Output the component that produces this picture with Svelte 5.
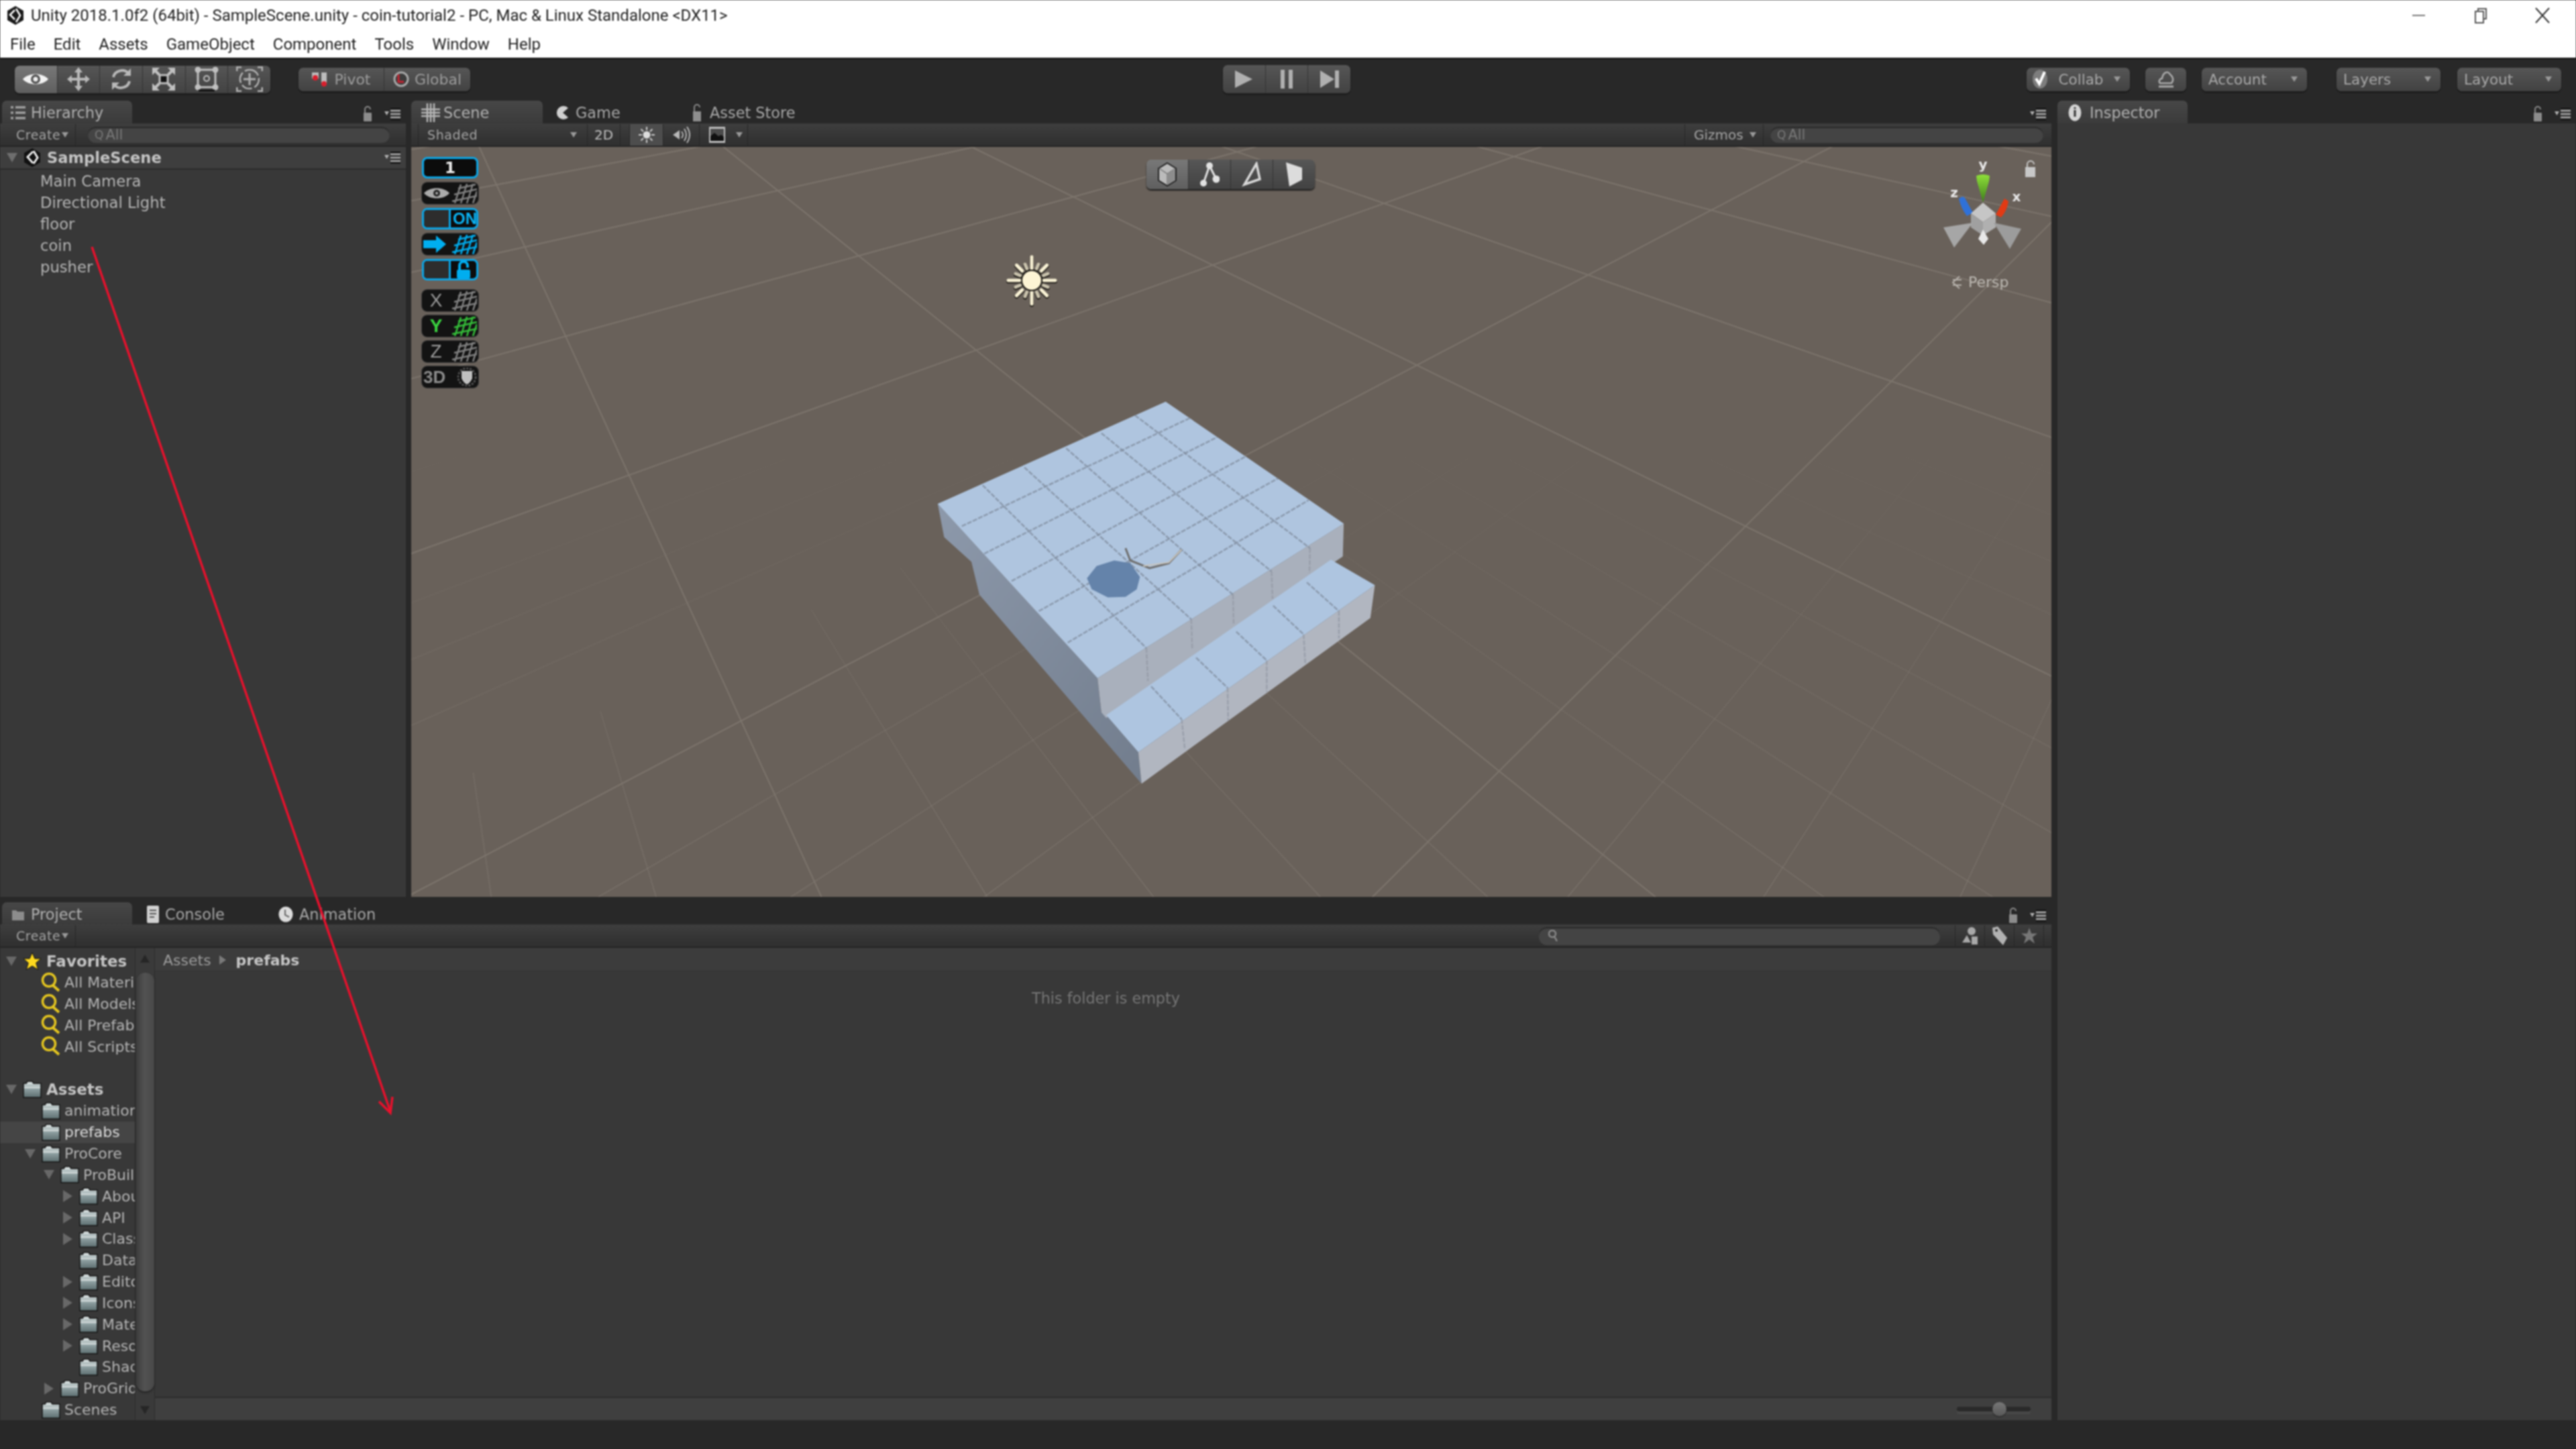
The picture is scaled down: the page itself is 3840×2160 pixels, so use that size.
<script>
  const menus = ["File", "Edit", "Assets", "GameObject", "Component", "Tools", "Window", "Help"];
  const hierarchy = ["Main Camera", "Directional Light", "floor", "coin", "pusher"];

  // depth = indent level, arrow: open | closed | none, icon: star | search | folder
  const tree = [
    { name: "Favorites", depth: 0, arrow: "open", icon: "star", bold: true },
    { name: "All Materials", depth: 1, icon: "search" },
    { name: "All Models", depth: 1, icon: "search" },
    { name: "All Prefabs", depth: 1, icon: "search" },
    { name: "All Scripts", depth: 1, icon: "search" },
    { name: "", depth: 0 },
    { name: "Assets", depth: 0, arrow: "open", icon: "folder", bold: true },
    { name: "animations", depth: 1, icon: "folder" },
    { name: "prefabs", depth: 1, icon: "folder", selected: true },
    { name: "ProCore", depth: 1, arrow: "open", icon: "folder" },
    { name: "ProBuilder", depth: 2, arrow: "open", icon: "folder" },
    { name: "About", depth: 3, arrow: "closed", icon: "folder" },
    { name: "API", depth: 3, arrow: "closed", icon: "folder" },
    { name: "Classes", depth: 3, arrow: "closed", icon: "folder" },
    { name: "Data", depth: 3, icon: "folder" },
    { name: "Editor", depth: 3, arrow: "closed", icon: "folder" },
    { name: "Icons", depth: 3, arrow: "closed", icon: "folder" },
    { name: "Material", depth: 3, arrow: "closed", icon: "folder" },
    { name: "Resources", depth: 3, arrow: "closed", icon: "folder" },
    { name: "Shaders", depth: 3, icon: "folder" },
    { name: "ProGrids", depth: 2, arrow: "closed", icon: "folder" },
    { name: "Scenes", depth: 1, icon: "folder" },
  ];

  // ground grid: homography from the unit square to four major grid crossings
  const sceneX = (x) => 613 + x / 0.6413;
  const sceneY = (y) => 219 + y / 1.4025;
  const quad = [[540, 425], [930, 118], [1415, 490], [1040, 1305]].map(([x, y]) => [sceneX(x), sceneY(y)]);
  const [[x0, y0], [x1, y1], [x2, y2], [x3, y3]] = quad;
  const det = (x1 - x2) * (y3 - y2) - (x3 - x2) * (y1 - y2);
  const sx = x0 - x1 + x2 - x3;
  const sy = y0 - y1 + y2 - y3;
  const g = (sx * (y3 - y2) - (x3 - x2) * sy) / det;
  const h = ((x1 - x2) * sy - sx * (y1 - y2)) / det;
  const project = (u, v) => {
    const w = g * u + h * v + 1;
    return { w, x: ((x1 - x0 + g * x1) * u + (x3 - x0 + h * x3) * v + x0) / w, y: ((y1 - y0 + g * y1) * u + (y3 - y0 + h * y3) * v + y0) / w };
  };
  function gridLine(axis, value, from, to) {
    const pts = [];
    for (let i = 0; i <= 200; i++) {
      const t = from + ((to - from) * i) / 200;
      const p = axis === "u" ? project(value, t) : project(t, value);
      if (p.w > 0.06) pts.push(p);
    }
    if (pts.length < 2) return null;
    const a = pts[0];
    const b = pts[pts.length - 1];
    return { x1: a.x, y1: a.y, x2: b.x, y2: b.y };
  }
  const majors = [];
  const minors = [];
  for (let i = -6; i <= 10; i++) {
    majors.push(gridLine("u", i / 2, -3, 5), gridLine("v", i / 2, -3, 5));
  }
  for (let i = -30; i <= 50; i++) {
    if (i % 5 === 0) continue;
    minors.push(gridLine("u", i / 10, 0.4, 3), gridLine("v", i / 10 + 0.4, -3, 5));
  }

  // block corners were read off a crop of the reference
  const bx = (x) => 1350 + x / 2.09;
  const by = (y) => 560 + y / 2.45;
  const poly = (list) => list.map(([x, y]) => `${bx(x).toFixed(1)},${by(y).toFixed(1)}`).join(" ");
  const seam = (a, b) => ({ x1: bx(a[0]), y1: by(a[1]), x2: bx(b[0]), y2: by(b[1]) });
  const seams = [
    [[240, 400], [750, 995]], [[370, 335], [890, 890]], [[500, 265], [1020, 800]], [[610, 210], [1140, 715]], [[715, 145], [1260, 630]],
    [[175, 550], [885, 155]], [[245, 650], [970, 225]], [[330, 750], [1060, 295]], [[415, 860], [1160, 375]], [[505, 975], [1255, 455]],
    [[765, 1135], [860, 1255]], [[905, 1030], [1003, 1140]], [[1030, 935], [1125, 1040]], [[1145, 840], [1240, 945]], [[1250, 755], [1350, 860]],
  ].map(([a, b]) => seam(a, b));
  const faceSeams = [
    [[750, 995], [755, 1115]], [[890, 890], [893, 1000]], [[1020, 800], [1022, 910]], [[1140, 715], [1143, 815]], [[1260, 630], [1258, 720]],
    [[860, 1255], [870, 1365]], [[1003, 1140], [1005, 1260]], [[1125, 1040], [1125, 1155]], [[1240, 945], [1245, 1050]], [[1350, 860], [1350, 960]],
  ].map(([a, b]) => seam(a, b));

  // sun icon: 4 long rays, 4 mid diagonals, 8 faint short ones
  const sunRays = Array.from({ length: 16 }, (_, i) => {
    const a = (i * Math.PI) / 8;
    const kind = i % 4 === 0 ? "long" : i % 2 === 0 ? "mid" : "short";
    const from = kind === "long" ? 18 : kind === "mid" ? 20 : 19;
    const to = kind === "long" ? 35 : kind === "mid" ? 32 : 26;
    return {
      x1: 1538 + Math.cos(a) * from,
      y1: 418 + Math.sin(a) * from,
      x2: 1538 + Math.cos(a) * to,
      y2: 418 + Math.sin(a) * to,
      color: kind === "short" ? "#c9c2ac" : "#f8f1d4",
    };
  });
</script>

{#snippet lock()}
  <svg class="mini" width="14" height="24" viewBox="0 0 14 24"><path d="M3 11V5a4 4 0 0 1 8 0" fill="none" stroke="#8a8a8a" stroke-width="2" /><rect x="1" y="10" width="12" height="13" rx="1" fill="#8c8c8c" /></svg>
{/snippet}

{#snippet panelMenu()}
  <svg class="mini" width="24" height="20" viewBox="0 0 24 20"><path d="M0 6h7l-3.500 6z" fill="#b0b0b0" /><rect x="9" y="1" width="15" height="18" fill="#111" /><path d="M9 5h15M9 10h15M9 15h15" stroke="#a8a8a8" stroke-width="3" /></svg>
{/snippet}

{#snippet arrowDown()}
  <svg class="caret" width="10" height="8" viewBox="0 0 10 8"><path d="M0 0h10L5 8z" fill="currentColor" /></svg>
{/snippet}

{#snippet folder()}
  <svg width="28" height="28" viewBox="0 0 28 28">
    <defs><linearGradient id="fld" x1="0" y1="0" x2="0" y2="1"><stop offset="0" stop-color="#e8eeee" /><stop offset=".32" stop-color="#a6b4b5" /><stop offset=".36" stop-color="#e0e6e6" /><stop offset=".48" stop-color="#8e9fa1" /><stop offset="1" stop-color="#5c6e70" /></linearGradient></defs>
    <path d="M1 5h4l2-3h7l2 3h11v21H1z" fill="url(#fld)" stroke="#141414" stroke-width="1.500" />
  </svg>
{/snippet}

{#snippet hatch(color)}
  <svg class="hatch" width="40" height="30" viewBox="0 0 40 30"><path d="M3 27 L40 19M6 17 L40 9M12 8 L38 2M7 30 L16 2M16 30 L25 1M25 30 L34 1M34 30 L40 12" stroke={color} stroke-width="2.500" fill="none" /></svg>
{/snippet}

<div class="editor">
  <header class="titlebar">
    <div class="title-line">
      <svg class="unity-logo" width="30" height="30" viewBox="0 0 30 30"><path d="M15 1 27 8v14l-12 7-12-7V8z" fill="#1b1b1b" /><path d="M14 7 7 14l7 7M16 5l6 10-6 10" fill="none" stroke="#fff" stroke-width="2.500" /></svg>
      <span class="title-text">Unity 2018.1.0f2 (64bit) - SampleScene.unity - coin-tutorial2 - PC, Mac &amp; Linux Standalone &lt;DX11&gt;</span>
      <div class="window-buttons">
        <svg width="24" height="24" viewBox="0 0 24 24"><path d="M2 12h19" stroke="#777" stroke-width="2" /></svg>
        <svg width="24" height="24" viewBox="0 0 24 24"><path d="M8 6V2h12v15h-4M4 6h12v17H4z" fill="none" stroke="#555" stroke-width="2" /></svg>
        <svg width="24" height="24" viewBox="0 0 24 24"><path d="M2 1l20 22M22 1L2 23" fill="none" stroke="#333" stroke-width="2" /></svg>
      </div>
    </div>
    <nav class="menu-line">
      {#each menus as item}
        <span>{item}</span>
      {/each}
    </nav>
  </header>

  <div class="toolbar">
    <div class="group tools">
      <button class="tbtn on">
        <svg width="40" height="26" viewBox="0 0 40 26"><path d="M1 13C9 3 31 3 39 13 31 23 9 23 1 13z" fill="#f2f2f2" /><circle cx="20" cy="13" r="7" fill="#555" /><circle cx="20" cy="13" r="3.500" fill="#eee" /></svg>
      </button>
      <button class="tbtn">
        <svg width="34" height="36" viewBox="0 0 34 36" fill="#b8b8b8"><path d="M17 0l6 8h-4v8h8v-4l7 6-7 6v-4h-8v8h4l-6 8-6-8h4v-8H7v4l-7-6 7-6v4h8V8h-4z" /></svg>
      </button>
      <button class="tbtn">
        <svg width="32" height="36" viewBox="0 0 32 36" fill="none" stroke="#b8b8b8" stroke-width="4"><path d="M4 15C6 5 20 2 26 9" /><path d="M28 21C26 31 12 34 6 27" /><path d="M30 2v11H19M2 34V23h11" stroke="none" fill="#b8b8b8" /></svg>
      </button>
      <button class="tbtn">
        <svg width="36" height="36" viewBox="0 0 36 36" fill="#c0c0c0"><rect x="12" y="12" width="12" height="12" fill="#111" stroke="#c0c0c0" stroke-width="3" /><path d="M1 1h11L8 5l5 5-3 3-5-5-4 4zM35 1H24l4 4-5 5 3 3 5-5 4 4zM1 35h11l-4-4 5-5-3-3-5 5-4-4zM35 35H24l4-4-5-5 3-3 5 5 4-4z" /></svg>
      </button>
      <button class="tbtn">
        <svg width="36" height="38" viewBox="0 0 36 38"><rect x="5" y="5" width="26" height="26" fill="none" stroke="#c0c0c0" stroke-width="3" /><circle cx="18" cy="18" r="4" fill="none" stroke="#c0c0c0" stroke-width="2" /><g fill="#c0c0c0"><circle cx="5" cy="5" r="4.500" /><circle cx="31" cy="5" r="4.500" /><circle cx="5" cy="31" r="4.500" /><circle cx="31" cy="31" r="4.500" /></g><path d="M6 36h24" stroke="#111" stroke-width="3" /></svg>
      </button>
      <button class="tbtn">
        <svg width="40" height="38" viewBox="0 0 40 38" fill="none" stroke="#b0b0b0"><path d="M20 5a14 14 0 1 1-.1 0" stroke-width="2.500" stroke-dasharray="16 4" /><path d="M20 10v18M11 19h18" stroke-width="3" /><path d="M1 7V1h7M39 7V1h-7M1 31v6h7M39 31v6h-7" stroke-width="3" /></svg>
      </button>
    </div>

    <div class="group pivot">
      <button class="tbtn text">
        <svg width="26" height="26" viewBox="0 0 26 26"><rect x="1" y="3" width="10" height="9" fill="#bbb" /><rect x="15" y="3" width="8" height="18" fill="#bbb" /><circle cx="6" cy="11" r="4" fill="#d81f2d" /><circle cx="19" cy="20" r="4" fill="#d81f2d" /></svg>
        Pivot
      </button>
      <button class="tbtn text">
        <svg width="24" height="30" viewBox="0 0 24 30"><circle cx="12" cy="15" r="10" fill="#3c3c3c" stroke="#a8a8a8" stroke-width="3" /><path d="M8 8v11h8" fill="none" stroke="#c42230" stroke-width="3" /></svg>
        Global
      </button>
    </div>

    <div class="group play">
      <button class="tbtn">
        <svg width="28" height="28" viewBox="0 0 28 28"><path d="M1 1l26 13L1 27z" fill="#b0b0b0" /></svg>
      </button>
      <button class="tbtn">
        <svg width="22" height="28" viewBox="0 0 22 28" fill="#b0b0b0"><rect x="2" width="6" height="28" /><rect x="14" width="6" height="28" /></svg>
      </button>
      <button class="tbtn">
        <svg width="30" height="28" viewBox="0 0 30 28" fill="#b0b0b0"><path d="M1 1l21 13L1 27z" /><rect x="23" y="1" width="6" height="26" /></svg>
      </button>
    </div>

    <div class="account-side">
      <button class="pill collab">
        <svg width="24" height="32" viewBox="0 0 24 32"><ellipse cx="12" cy="16" rx="11" ry="14" fill="#7d7d7d" /><path d="M6 15l5 8 8-18" fill="none" stroke="#fff" stroke-width="4" /></svg>
        <span>Collab</span>{@render arrowDown()}
      </button>
      <button class="pill cloud">
        <svg width="32" height="32" viewBox="0 0 32 32" fill="none" stroke="#aaa" stroke-width="2.500"><path d="M7 22c-3-3 0-7 3-7 1-8 8-13 12-6 4 3 6 8 2 13z" /><path d="M5 27h22" stroke-width="3" /></svg>
      </button>
      <button class="pill account">Account{@render arrowDown()}</button>
      <button class="pill layers">Layers{@render arrowDown()}</button>
      <button class="pill layout">Layout{@render arrowDown()}</button>
    </div>
  </div>

  <div class="workspace">
    <div class="main-column">
      <div class="top-row">
        <section class="panel">
          <div class="strip">
            <div class="tab active hierarchy-tab">
              <svg width="22" height="22" viewBox="0 0 22 22"><path d="M0 3h4M7 3h15M0 11h4M7 11h15M0 19h4M7 19h15" stroke="#a0a0a0" stroke-width="3.500" /></svg>
              Hierarchy
            </div>
            <div class="strip-actions">{@render lock()}{@render panelMenu()}</div>
          </div>
          <div class="panel-tools">
            <span class="create">Create{@render arrowDown()}</span>
            <span class="search hierarchy-search"><i>Q</i>All</span>
          </div>
          <div class="scene-head">
            <svg class="arrow-open" width="16" height="14" viewBox="0 0 16 14"><path d="M0 0h16L8 14z" fill="#6e6e6e" /></svg>
            <svg width="26" height="30" viewBox="0 0 26 30"><path d="M13 1 25 8v14l-12 7L1 22V8z" fill="#111" /><path d="M14 6 6 14l8 9M15 5l6 10-6 9" fill="none" stroke="#eee" stroke-width="3" /></svg>
            <b>SampleScene</b>
            <span class="scene-menu">{@render panelMenu()}</span>
          </div>
          <ul class="hier-list">
            {#each hierarchy as name}
              <li>{name}</li>
            {/each}
          </ul>
        </section>

        <section class="panel scene-panel">
          <div class="strip">
            <div class="tab active scene-tab">
              <svg width="28" height="28" viewBox="0 0 28 28"><path d="M9 0v28M14 0v28M19 0v28M0 9h28M0 14h28M0 19h28" stroke="#b8b8b8" stroke-width="2.500" /></svg>
              Scene
            </div>
            <div class="tab">
              <svg width="20" height="22" viewBox="0 0 20 22"><path d="M18 4A10 10 0 1 0 18 18L10 11z" fill="#d0d0d0" /></svg>
              Game
            </div>
            <div class="tab store-tab">
              <svg width="16" height="28" viewBox="0 0 16 28"><path d="M4 12V6a4 4 0 0 1 8 0" fill="none" stroke="#888" stroke-width="2" /><rect x="2" y="12" width="12" height="15" fill="#8e8e8e" /></svg>
              Asset Store
            </div>
            <div class="strip-actions">{@render panelMenu()}</div>
          </div>
          <div class="panel-tools scene-tools">
            <span class="seg shaded">Shaded{@render arrowDown()}</span>
            <span class="seg two-d">2D</span>
            <span class="seg sun-btn">
              <svg width="24" height="24" viewBox="0 0 24 24"><circle cx="12" cy="12" r="5.500" fill="#ddd" /><path d="M12 0v5M12 19v5M0 12h5M19 12h5M3.500 3.500l3.500 3.500M17 17l3.500 3.500M3.500 20.500l3.500-3.500M17 7l3.500-3.500" stroke="#ccc" stroke-width="2" /></svg>
            </span>
            <span class="seg icon-seg">
              <svg width="28" height="26" viewBox="0 0 28 26" fill="none" stroke="#b8b8b8" stroke-width="2"><path d="M1 13l10-7v14z" fill="#b8b8b8" stroke="none" /><path d="M14 8q4 5 0 10M18 4q6 9 0 18M22 1q8 12 0 24" /></svg>
            </span>
            <span class="seg icon-seg image-seg">
              <svg width="24" height="24" viewBox="0 0 24 24"><rect width="24" height="24" fill="#bdbdbd" /><rect x="2" y="3" width="20" height="18" fill="#4a4a4a" /><path d="M2 21v-7l6-5 6 5 4-2 4 3v6z" fill="#111" /></svg>
              {@render arrowDown()}
            </span>
            <span class="seg gizmos">Gizmos{@render arrowDown()}</span>
            <span class="search scene-search"><i>Q</i>All</span>
          </div>

          <div class="viewport">
            <svg class="world" width="2445" height="1118" viewBox="613 219 2445 1118">
              <defs>
                <linearGradient id="minorFade" gradientUnits="userSpaceOnUse" x1="0" y1="640" x2="0" y2="1337">
                  <stop offset="0" stop-color="#857d75" stop-opacity="0" />
                  <stop offset="1" stop-color="#857d75" stop-opacity=".5" />
                </linearGradient>
                <linearGradient id="leftFace" x1="0" y1="0" x2="1" y2="1">
                  <stop offset="0" stop-color="#8d99ab" />
                  <stop offset="1" stop-color="#727d8d" />
                </linearGradient>
                <linearGradient id="greenCone" x1="0" y1="0" x2="0" y2="1">
                  <stop offset="0" stop-color="#8fe03a" />
                  <stop offset="1" stop-color="#3d7d1c" />
                </linearGradient>
              </defs>
              {#each minors as l}
                {#if l}<line x1={l.x1} y1={l.y1} x2={l.x2} y2={l.y2} stroke="url(#minorFade)" stroke-width="1.500" />{/if}
              {/each}
              {#each majors as l}
                {#if l}<line x1={l.x1} y1={l.y1} x2={l.x2} y2={l.y2} stroke="#7c746c" stroke-width="2" />{/if}
              {/each}

              <polygon points={poly([[100, 468], [598, 1105], [610, 1230], [625, 1240], [725, 1375], [735, 1490], [230, 800], [205, 680], [120, 590]])} fill="url(#leftFace)" />
              <polygon points={poly([[598, 1105], [1365, 540], [1362, 660], [1325, 690], [625, 1250], [610, 1230]])} fill="#a9b0bc" />
              <polygon points={poly([[725, 1375], [1462, 765], [1448, 885], [735, 1490]])} fill="#b1b6c0" />
              <polygon points={poly([[625, 1240], [1325, 672], [1462, 765], [725, 1375]])} fill="#aec5e0" />
              <polygon points={poly([[100, 468], [810, 95], [1365, 540], [598, 1105]])} fill="#afc5df" />
              {#each seams as l}
                <line x1={l.x1} y1={l.y1} x2={l.x2} y2={l.y2} stroke="#7f8b9c" stroke-width="2.500" stroke-opacity=".75" stroke-dasharray="7 2" />
              {/each}
              {#each faceSeams as l}
                <line x1={l.x1} y1={l.y1} x2={l.x2} y2={l.y2} stroke="#959ba6" stroke-width="2.500" stroke-opacity=".8" stroke-dasharray="7 2" />
              {/each}
              <polygon points={poly([[650, 675], [700, 685], [730, 735], [720, 780], [685, 808], [630, 810], [580, 780], [565, 740], [595, 695]])} fill="#6483aa" />
              <polyline points={poly([[685, 630], [700, 675], [760, 703], [820, 685], [860, 635]])} fill="none" stroke="#6f6f6f" stroke-width="3" />
              <polyline points={poly([[740, 695], [820, 682], [860, 635]])} fill="none" stroke="#c8c4bc" stroke-width="2" />

              <!-- directional light -->
              {#each sunRays as r}
                <line x1={r.x1} y1={r.y1 + 1.500} x2={r.x2} y2={r.y2 + 1.500} stroke="#1e1b16" stroke-width="6" stroke-linecap="round" />
              {/each}
              {#each sunRays as r}
                <line x1={r.x1} y1={r.y1} x2={r.x2} y2={r.y2} stroke={r.color} stroke-width="5" stroke-linecap="round" />
              {/each}
              <circle cx="1538" cy="418" r="15" fill="#fdf4d4" stroke="#1e1b16" stroke-width="2" />

              <!-- axis gizmo -->
              <path d="M2946 262q10-4 20 0l-1 8-9 32-9-32z" fill="url(#greenCone)" />
              <path d="M2920 296q6-5 9-1l12 22-9 5q-9-12-12-26z" fill="#2f71d8" />
              <path d="M2988 296l6 4q-2 14-11 24l-8-4z" fill="#e23a14" />
              <path d="M2956 302l19 16-19 13-18-13z" fill="#c6c6c6" />
              <path d="M2938 318l18 13v20l-18-12z" fill="#a0a0a0" />
              <path d="M2975 318l-19 13v20l19-12z" fill="#b0b0b0" />
              <path d="M2941 332l-44 7 16 30z" fill="#a6a6a6" />
              <path d="M2972 332l41 9-17 30z" fill="#9c9c9c" />
              <path d="M2956 342l-7 14 8 9 7-9z" fill="#e8e8e8" />
              <text class="axis" x="2956" y="252">y</text>
              <text class="axis" x="2913" y="294">z</text>
              <text class="axis" x="3006" y="300">x</text>
              <path d="M2921 412l-10 9 10 9M2911 417h13M2911 425h13" fill="none" stroke="#b5b0aa" stroke-width="2" />
              <text class="persp" x="2934" y="428">Persp</text>
              <path d="M3022 249v-4a5 5 0 0 1 10 0" fill="none" stroke="#c8c8c8" stroke-width="2" />
              <rect x="3019" y="249" width="15" height="15" fill="#c8c8c8" />
            </svg>

            <div class="widgets">
              <div class="widget lit"><span class="num">1</span></div>
              <div class="widget">
                <svg width="40" height="24" viewBox="0 0 40 24"><path d="M1 12C9 2 31 2 39 12 31 22 9 22 1 12z" fill="#aaa" /><circle cx="20" cy="12" r="5" fill="#222" /><circle cx="20" cy="12" r="2" fill="#aaa" /></svg>
                {@render hatch("#808080")}
              </div>
              <div class="widget lit split"><span class="blank"></span><span class="on-label">ON</span></div>
              <div class="widget">
                <svg width="36" height="26" viewBox="0 0 36 26"><path d="M0 7h19V0l15 13-15 13v-7H0z" fill="#00aef0" /></svg>
                {@render hatch("#00aef0")}
              </div>
              <div class="widget lit split"><span class="blank"></span>
                <svg class="padlock" width="26" height="28" viewBox="0 0 26 28"><path d="M7 14V8a6 6 0 0 1 12 0v3" fill="none" stroke="#00aef0" stroke-width="4" /><rect x="3" y="14" width="20" height="13" rx="2" fill="#00aef0" /></svg>
              </div>
              <div class="widget axis-widget"><span class="letter">X</span>{@render hatch("#808080")}</div>
              <div class="widget"><span class="letter green">Y</span>{@render hatch("#35c03a")}</div>
              <div class="widget"><span class="letter">Z</span>{@render hatch("#808080")}</div>
              <div class="widget">
                <span class="letter three">3D</span>
                <svg width="30" height="28" viewBox="0 0 30 28"><circle cx="15" cy="14" r="13" fill="none" stroke="#555" stroke-width="3" stroke-dasharray="3 2" /><path d="M7 5h16v11q-3 7-8 9-5-2-8-9z" fill="#c0c0c0" /></svg>
              </div>
            </div>

            <div class="group poly-tools">
              <button class="tbtn on">
                <svg width="30" height="36" viewBox="0 0 30 36"><path d="M15 1 28 9v18l-13 8-13-8V9z" fill="#bbb" stroke="#222" stroke-width="2" /><path d="M3 9l12 8 12-8M15 17v17" stroke="#777" stroke-width="1.500" fill="none" /><path d="M15 17l12-8v17l-12 8z" fill="#8c8c8c" /></svg>
              </button>
              <button class="tbtn">
                <svg width="30" height="38" viewBox="0 0 30 38" fill="#e2e2e2"><path d="M15 6 6 32M15 6l10 20" stroke="#e2e2e2" stroke-width="3" /><circle cx="15" cy="6" r="5" /><circle cx="6" cy="32" r="5" /><circle cx="25" cy="26" r="5.500" /></svg>
              </button>
              <button class="tbtn">
                <svg width="30" height="38" viewBox="0 0 30 38"><path d="M22 3 4 34l23-8z" fill="none" stroke="#d8d8d8" stroke-width="3.500" /></svg>
              </button>
              <button class="tbtn">
                <svg width="30" height="38" viewBox="0 0 30 38"><path d="M3 1l24 8v18L8 37z" fill="#dcdcdc" /></svg>
              </button>
            </div>
          </div>
        </section>
      </div>

      <div class="bottom-row">
        <div class="strip project-strip">
          <div class="tab active">
            <svg width="20" height="20" viewBox="0 0 20 20"><path d="M1 4h6l2 2h10v13H1z" fill="#8c8c8c" /></svg>
            Project
          </div>
          <div class="tab">
            <svg width="18" height="26" viewBox="0 0 18 26"><rect width="18" height="26" rx="2" fill="#d0d0d0" /><path d="M4 7h10M4 12h10M4 17h7" stroke="#555" stroke-width="2" /></svg>
            Console
          </div>
          <div class="tab">
            <svg width="22" height="24" viewBox="0 0 22 24"><ellipse cx="11" cy="12" rx="10.500" ry="11.500" fill="#dcdcdc" /><path d="M10 5v8l6 3" fill="none" stroke="#666" stroke-width="2" /></svg>
            Animation
          </div>
          <div class="strip-actions">{@render lock()}{@render panelMenu()}</div>
        </div>
        <div class="panel-tools project-tools">
          <span class="create">Create{@render arrowDown()}</span>
          <span class="search project-search">
            <svg width="14" height="18" viewBox="0 0 14 18" fill="none" stroke="#888" stroke-width="2.500"><circle cx="6" cy="6" r="5" /><path d="M9 10l4 7" /></svg>
          </span>
          <span class="filter-btns">
            <span class="filter">
              <svg width="24" height="28" viewBox="0 0 24 28" fill="#a8a8a8"><circle cx="14" cy="7" r="6" /><path d="M7 13l6 11H0z" /><rect x="14" y="15" width="9" height="12" /></svg>
            </span>
            <span class="filter">
              <svg width="24" height="30" viewBox="0 0 24 30" fill="#b2b2b2"><path d="M1 3l8-2 14 17-6 11-15-16z" /><circle cx="7" cy="7" r="2" fill="#333" /></svg>
            </span>
            <span class="filter">
              <svg width="24" height="24" viewBox="0 0 24 24" fill="#777"><path d="M12 0l3 8.500h9l-7 5.500 3 9.500-8-6-8 6 3-9.500-7-5.500h9z" /></svg>
            </span>
          </span>
        </div>
        <div class="project-body">
          <div class="tree">
            {#each tree as row}
              <div class="tree-row" class:selected={row.selected} class:bold={row.bold} style="padding-left: {7 + row.depth * 28}px">
                {#if row.name}
                  <span class="twisty">
                    {#if row.arrow === "open"}
                      <svg width="16" height="14" viewBox="0 0 16 14"><path d="M0 0h16L8 14z" fill="#686868" /></svg>
                    {:else if row.arrow === "closed"}
                      <svg width="14" height="18" viewBox="0 0 14 18"><path d="M0 0l14 9-14 9z" fill="#686868" /></svg>
                    {/if}
                  </span>
                  <span class="row-icon">
                    {#if row.icon === "star"}
                      <svg width="28" height="28" viewBox="0 0 28 28"><path d="M14 1l3.800 9h9.200l-7.300 6.500 3 10L14 21l-8.700 5.500 3-10L1 10h9.200z" fill="#fdd81e" stroke="#111" /></svg>
                    {:else if row.icon === "search"}
                      <svg width="30" height="32" viewBox="0 0 30 32" fill="none"><circle cx="12" cy="12" r="9.500" stroke="#e5c61f" stroke-width="3.500" /><path d="M18 20l9 8" stroke="#e5c61f" stroke-width="4" /></svg>
                    {:else}
                      {@render folder()}
                    {/if}
                  </span>
                  <span class="row-name">{row.name}</span>
                {/if}
              </div>
            {/each}
          </div>
          <div class="scrollbar">
            <svg class="sb-up" width="14" height="12" viewBox="0 0 14 12"><path d="M7 0l7 12H0z" fill="#262626" /></svg>
            <div class="sb-thumb"></div>
            <svg class="sb-down" width="14" height="12" viewBox="0 0 14 12"><path d="M0 0h14L7 12z" fill="#262626" /></svg>
          </div>
          <div class="assets-pane">
            <div class="breadcrumb">
              <span>Assets</span>
              <svg width="10" height="14" viewBox="0 0 10 14"><path d="M0 0l10 7-10 7z" fill="#7a7a7a" /></svg>
              <b>prefabs</b>
            </div>
            <div class="empty">This folder is empty</div>
            <div class="assets-foot">
              <div class="slider"><div class="knob"></div></div>
            </div>
          </div>
        </div>
      </div>
    </div>

    <section class="inspector">
      <div class="strip">
        <div class="tab active inspector-tab">
          <svg width="20" height="26" viewBox="0 0 20 26"><ellipse cx="10" cy="13" rx="9.500" ry="12.500" fill="#d4d4d4" /><path d="M10 9v10" stroke="#333" stroke-width="3" /><circle cx="10" cy="6" r="1.600" fill="#333" /></svg>
          Inspector
        </div>
        <div class="strip-actions">{@render lock()}{@render panelMenu()}</div>
      </div>
      <div class="inspector-body"></div>
    </section>
  </div>

  <footer class="status"></footer>

  <!-- red annotation drawn over the screenshot -->
  <svg class="annotation" width="3840" height="2160" viewBox="0 0 3840 2160">
    <path d="M137 368 582 1657" stroke="#e8102c" stroke-width="3.500" fill="none" />
    <path d="M565 1642l17 17 3-24" stroke="#e8102c" stroke-width="3.500" fill="none" />
  </svg>
</div>

<style>
  :global(body) {
    margin: 0;
    background: #282828;
  }

  .editor {
    position: relative;
    width: 3840px;
    height: 2160px;
    display: flex;
    flex-direction: column;
    overflow: hidden;
    background: #282828;
    font-family: "DejaVu Sans", sans-serif;
    font-size: 22px;
    color: #b4b4b4;
    filter: blur(0.9px);
  }

  svg {
    display: block;
    flex: none;
  }

  button {
    font: inherit;
    color: inherit;
    border: 0;
    margin: 0;
    padding: 0;
    background: none;
  }

  /* title + menu */
  .titlebar {
    height: 86px;
    background: #fff;
    color: #222;
    font-family: Roboto, sans-serif;
    font-size: 24px;
    border-bottom: 2px solid #111;
  }

  .title-line {
    height: 45px;
    display: flex;
    align-items: center;
    padding-left: 8px;
  }

  .title-text {
    margin-left: 8px;
  }

  .window-buttons {
    margin-left: auto;
    display: flex;
    gap: 68px;
    padding-right: 38px;
  }

  .menu-line {
    height: 41px;
    display: flex;
    align-items: center;
    gap: 27px;
    padding-left: 15px;
  }

  /* main toolbar */
  .toolbar {
    height: 62px;
    position: relative;
    display: flex;
    align-items: center;
    padding-left: 22px;
    box-sizing: border-box;
  }

  .group {
    display: flex;
    border-radius: 7px;
    overflow: hidden;
    box-shadow: 0 2px 2px #1a1a1a;
  }

  .tbtn {
    display: flex;
    align-items: center;
    justify-content: center;
    background: linear-gradient(#565656, #424242);
    border-left: 1px solid #333;
  }

  .tbtn:first-child {
    border-left: 0;
  }

  .tbtn.on {
    background: linear-gradient(#787878, #5f5f5f);
  }

  .tools {
    height: 41px;
    width: 381px;
    margin-top: -2px;
  }

  .tools .tbtn,
  .play .tbtn,
  .poly-tools .tbtn {
    flex: 1;
  }

  .pivot {
    height: 35px;
    width: 256px;
    margin-left: 42px;
    margin-top: -2px;
  }

  .tbtn.text {
    gap: 8px;
    color: #9c9c9c;
    font-size: 22px;
  }

  .tbtn.text:first-child {
    width: 127px;
  }

  .tbtn.text:last-child {
    width: 129px;
  }

  .play {
    height: 42px;
    width: 190px;
    margin-left: 1122px;
    margin-top: -2px;
  }

  .account-side {
    display: flex;
    align-items: center;
    margin-left: auto;
    margin-top: -2px;
    padding-right: 22px;
  }

  .pill {
    height: 35px;
    display: flex;
    align-items: center;
    justify-content: space-between;
    box-sizing: border-box;
    padding: 0 14px 0 10px;
    border-radius: 7px;
    background: linear-gradient(#565656, #424242);
    box-shadow: 0 2px 2px #1a1a1a;
    font-size: 21.5px;
    color: #a8a8a8;
  }

  .caret {
    width: 10px;
    height: 8px;
    color: #999;
  }

  .collab {
    width: 154px;
    margin-right: 23px;
    padding-left: 8px;
  }

  .cloud {
    width: 61px;
    margin-right: 23px;
    justify-content: center;
    padding: 0;
  }

  .account {
    width: 157px;
    margin-right: 44px;
  }

  .layers,
  .layout {
    width: 155px;
  }

  .layers {
    margin-right: 25px;
  }

  /* panels */
  .workspace {
    height: 1967px;
    display: flex;
  }

  .main-column {
    width: 3058px;
    display: flex;
    flex-direction: column;
  }

  .top-row {
    height: 1187px;
    display: flex;
    gap: 8px;
  }

  .panel {
    width: 605px;
    display: flex;
    flex-direction: column;
    background: #383838;
    background-clip: content-box;
  }

  .scene-panel {
    width: 2445px;
  }

  .strip {
    height: 34px;
    flex: none;
    display: flex;
    align-items: stretch;
    background: #282828;
    color: #a6a6a6;
  }

  .tab {
    width: 196px;
    box-sizing: border-box;
    display: flex;
    align-items: center;
    gap: 9px;
    padding-left: 20px;
    padding-top: 2px;
    border-radius: 7px 7px 0 0;
    white-space: nowrap;
    font-size: 22.4px;
  }

  .tab.active {
    background: linear-gradient(#474747, #3b3b3b);
    color: #b0b0b0;
  }

  .hierarchy-tab {
    width: 194px;
    margin-left: 3px;
    padding-left: 13px;
    gap: 8px;
  }

  .scene-tab {
    padding-left: 15px;
    gap: 5px;
  }

  .store-tab {
    padding-left: 26px;
    gap: 11px;
  }

  .strip-actions {
    margin-left: auto;
    display: flex;
    align-items: center;
    gap: 18px;
    padding-right: 8px;
    padding-top: 6px;
  }

  .panel-tools {
    height: 35px;
    flex: none;
    box-sizing: border-box;
    display: flex;
    align-items: center;
    background: linear-gradient(#3e3e3e, #2f2f2f);
    border-bottom: 2px solid #252525;
    font-size: 19px;
    color: #a4a4a4;
    padding-top: 1px;
  }

  .create {
    width: 113px;
    height: 100%;
    box-sizing: border-box;
    display: flex;
    align-items: center;
    justify-content: space-between;
    padding: 0 10px 0 24px;
    border-right: 1px solid #262626;
    letter-spacing: 0.5px;
    flex: none;
  }

  .search {
    height: 24px;
    display: flex;
    align-items: center;
    border-radius: 12px;
    background: #444;
    color: #797979;
    padding-left: 10px;
    font-size: 21px;
    box-shadow: inset 0 2px 1px #2a2a2a;
  }

  .search i {
    font-style: normal;
    font-size: 17px;
    margin-right: 3px;
  }

  .hierarchy-search {
    width: 450px;
    margin-left: 18px;
    box-sizing: border-box;
  }

  .scene-head {
    height: 34px;
    flex: none;
    display: flex;
    align-items: center;
    gap: 9px;
    box-sizing: border-box;
    padding-left: 10px;
    background: #3e3e3e;
    border-bottom: 2px solid #2b2b2b;
  }

  .scene-head b {
    color: #c4c4c4;
    font-size: 22.6px;
  }

  .scene-menu {
    margin-left: auto;
    padding-right: 8px;
  }

  .hier-list {
    list-style: none;
    margin: 0;
    padding: 1px 0 0;
    font-size: 22.7px;
  }

  .hier-list li {
    height: 32px;
    line-height: 32px;
    padding-left: 60px;
  }

  /* scene toolbar */
  .scene-tools {
    padding-left: 10px;
    gap: 0;
  }

  .seg {
    height: 100%;
    box-sizing: border-box;
    display: flex;
    align-items: center;
    justify-content: center;
    border-left: 1px solid #272727;
    flex: none;
  }

  .shaded {
    width: 252px;
    justify-content: space-between;
    padding: 0 15px 0 13px;
    letter-spacing: 0.6px;
  }

  .two-d {
    width: 50px;
    margin-right: 13px;
    border-right: 1px solid #272727;
    font-size: 20px;
    color: #c0c0c0;
  }

  .sun-btn {
    width: 50px;
    background: #4d4d4d;
  }

  .icon-seg {
    width: 54px;
  }

  .image-seg {
    width: 73px;
    gap: 16px;
    justify-content: flex-start;
    padding-left: 14px;
    border-right: 1px solid #272727;
  }

  .gizmos {
    width: 118px;
    margin-left: 1396px;
    justify-content: space-between;
    padding: 0 10px 0 13px;
    font-size: 20px;
    border-right: 1px solid #272727;
  }

  .scene-search {
    width: 407px;
    margin-left: 10px;
    box-sizing: border-box;
  }

  .viewport {
    position: relative;
    flex: 1;
    background: #69615a;
    overflow: hidden;
  }

  .world {
    position: absolute;
    inset: 0;
  }

  .axis {
    font-family: "DejaVu Sans", sans-serif;
    font-size: 20px;
    font-weight: 700;
    fill: #e8e8e8;
    text-anchor: middle;
  }

  .persp {
    font-family: "DejaVu Sans", sans-serif;
    font-size: 22px;
    fill: #bdb9b3;
  }

  .widgets {
    position: absolute;
    left: 16px;
    top: 15px;
    display: flex;
    flex-direction: column;
    gap: 6px;
  }

  .widget {
    width: 84px;
    height: 32px;
    box-sizing: border-box;
    display: flex;
    align-items: center;
    justify-content: space-between;
    padding: 0 2px;
    border-radius: 8px;
    background: #131313;
    box-shadow: 0 0 0 1px #3d3d3d;
    overflow: hidden;
  }

  .widget.lit {
    justify-content: center;
    background: #0c0c0c;
    box-shadow: none;
    border: 3px solid #0aa5e6;
  }

  .widget.split {
    justify-content: flex-start;
    padding: 0;
  }

  .axis-widget {
    margin-top: 8px;
  }

  .blank {
    width: 37px;
    height: 100%;
    background: #2d2d2d;
    border-right: 3px solid #0aa5e6;
    box-sizing: content-box;
    flex: none;
  }

  .num {
    font-weight: 700;
    color: #eee;
    font-size: 23px;
  }

  .on-label {
    margin-left: 3px;
    color: #0ab4f5;
    font-family: "Liberation Sans", sans-serif;
    font-weight: 700;
    font-size: 24px;
  }

  .padlock {
    margin-left: 6px;
  }

  .letter {
    width: 38px;
    text-align: center;
    font-family: "Liberation Sans", sans-serif;
    font-size: 28px;
    color: #9a9a9a;
    flex: none;
  }

  .letter.green {
    color: #3ad43f;
    font-weight: 700;
  }

  .letter.three {
    width: auto;
    color: #8c8c8c;
    font-weight: 700;
    font-size: 26px;
  }

  .hatch {
    width: 40px;
    height: 30px;
  }

  .poly-tools {
    position: absolute;
    left: 1096px;
    top: 19px;
    width: 251px;
    height: 44px;
  }

  /* project browser */
  .bottom-row {
    height: 772px;
    margin-top: 8px;
    display: flex;
    flex-direction: column;
  }

  .project-strip {
    height: 33px;
  }

  .project-strip .tab {
    padding-left: 22px;
  }

  .project-strip .tab.active {
    width: 194px;
    margin-left: 3px;
    padding-left: 14px;
  }

  .project-tools {
    height: 35px;
  }

  .project-search {
    width: 598px;
    margin-left: auto;
    height: 27px;
    box-sizing: border-box;
    padding-left: 14px;
  }

  .filter-btns {
    display: flex;
    height: 100%;
    margin-left: 22px;
    margin-right: 11px;
    border-left: 1px solid #272727;
  }

  .filter {
    width: 43px;
    display: flex;
    align-items: center;
    justify-content: center;
    border-right: 1px solid #272727;
  }

  .project-body {
    height: 704px;
    display: flex;
    background: #383838;
  }

  .tree {
    width: 201px;
    padding-top: 4px;
    overflow: hidden;
    flex: none;
    box-sizing: border-box;
  }

  .tree-row {
    height: 31.85px;
    display: flex;
    align-items: center;
    box-sizing: border-box;
    white-space: nowrap;
  }

  .tree-row.selected {
    background: #454545;
    color: #dcdcdc;
  }

  .tree-row.bold {
    color: #c4c4c4;
    font-weight: 700;
    font-size: 23px;
  }

  .tree-row.bold .row-icon {
    margin-right: 6px;
  }

  .twisty {
    width: 20px;
    margin-right: 6px;
    display: flex;
    justify-content: center;
    flex: none;
  }

  .row-icon {
    width: 30px;
    margin-right: 5px;
    display: flex;
    justify-content: center;
    flex: none;
  }

  .scrollbar {
    width: 29px;
    flex: none;
    display: flex;
    flex-direction: column;
    align-items: center;
    background: #3a3a3a;
    border-left: 1px solid #2c2c2c;
    box-sizing: border-box;
  }

  .sb-up {
    margin-top: 10px;
  }

  .sb-thumb {
    width: 27px;
    margin-top: 15px;
    height: 624px;
    flex: none;
    border-radius: 13px;
    background: linear-gradient(90deg, #3c3c3c, #525252 45%, #484848);
    box-shadow: 0 2px 3px #222;
  }

  .sb-down {
    margin-top: 22px;
  }

  .assets-pane {
    flex: 1;
    display: flex;
    flex-direction: column;
    min-width: 0;
    border-left: 1px solid #2b2b2b;
  }

  .breadcrumb {
    height: 35px;
    flex: none;
    display: flex;
    align-items: center;
    gap: 12px;
    padding: 2px 0 0 12px;
    background: #3c3c3c;
    box-sizing: border-box;
    border-bottom: 1px solid #333;
    color: #9c9c9c;
  }

  .breadcrumb b {
    color: #c6c6c6;
    margin-left: 3px;
  }

  .empty {
    flex: 1;
    padding-top: 27px;
    padding-left: 8px;
    text-align: center;
    color: #757575;
    font-size: 22.3px;
  }

  .assets-foot {
    height: 35px;
    flex: none;
    box-sizing: border-box;
    display: flex;
    align-items: center;
    justify-content: flex-end;
    padding-right: 31px;
    background: #3f3f3f;
    border-top: 2px solid #2c2c2c;
  }

  .slider {
    width: 110px;
    height: 7px;
    position: relative;
    border-radius: 4px;
    background: #2a2a2a;
    box-shadow: 0 4px 0 #484848;
  }

  .knob {
    position: absolute;
    left: 53px;
    top: -7px;
    width: 21px;
    height: 21px;
    border-radius: 50%;
    background: linear-gradient(#777, #585858);
    box-shadow: 0 1px 2px #222;
  }

  .inspector {
    width: 773px;
    margin-left: 9px;
    display: flex;
    flex-direction: column;
  }

  .inspector-tab {
    width: 194px;
    padding-left: 16px;
    gap: 12px;
  }

  .inspector-body {
    flex: 1;
    background: #383838;
  }

  .status {
    height: 43px;
    background: #282828;
  }

  .annotation {
    position: absolute;
    inset: 0;
    pointer-events: none;
  }
</style>
